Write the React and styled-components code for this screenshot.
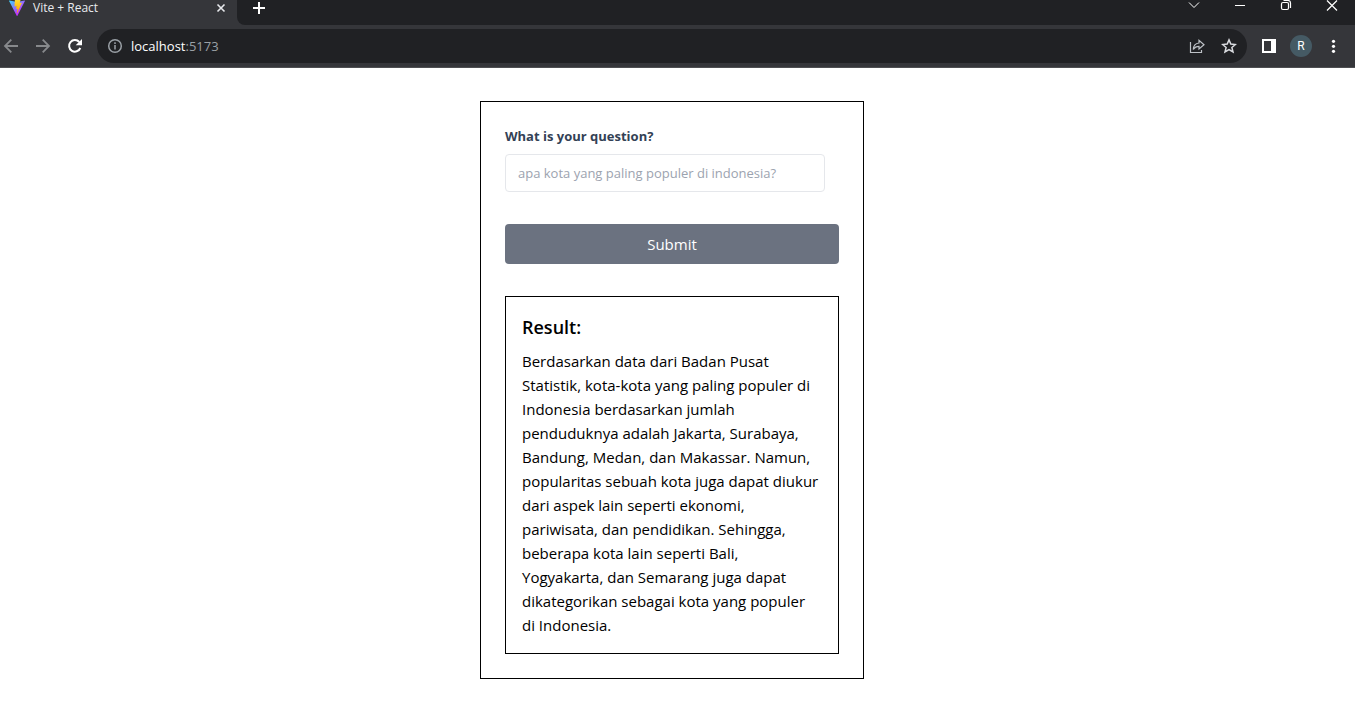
import React, { useState } from "react";
import styled, { createGlobalStyle } from "styled-components";

const GlobalStyle = createGlobalStyle`
  *, *::before, *::after { box-sizing: border-box; }
  body {
    margin: 0;
    background: #fff;
    color: #000;
    font-family: "Segoe UI", "Open Sans", "Noto Sans", sans-serif;
  }
  button, input { font: inherit; }
  h2, p { margin: 0; }
`;

const Chrome = styled.header`
  background: #35363a;
  border-bottom: 1px solid #4e4f52;
`;

const TabStrip = styled.div`
  display: flex;
  height: 25px;
  overflow: hidden;
`;

const Tab = styled.div`
  display: flex;
  align-items: center;
  gap: 8px;
  width: 237px;
  height: 16px;
  padding: 0 8px 0 9px;
  color: #e8eaed;
  font-size: 12px;
  line-height: 16px;
`;

const TabTitle = styled.span`
  flex: 1;
`;

const StripRest = styled.div`
  flex: 1;
  display: flex;
  align-items: flex-start;
  justify-content: space-between;
  padding: 0 15px 0 14px;
  background: #202124;
  border-bottom-left-radius: 8px;
`;

const WindowControls = styled.div`
  display: flex;
  gap: 30px;
`;

const IconButton = styled.button`
  display: flex;
  flex: none;
  padding: 0;
  border: 0;
  background: none;
  color: ${(p) => p.$color || "#fff"};
  cursor: pointer;
`;

const Toolbar = styled.div`
  display: flex;
  align-items: center;
  gap: 14px;
  height: 42px;
  padding: 0 14px 0 3px;
`;

const Group = styled.div`
  display: flex;
  align-items: center;
  gap: ${(p) => p.$gap}px;
`;

const AddressBar = styled.div`
  flex: 1;
  display: flex;
  align-items: center;
  gap: 8px;
  height: 34px;
  padding: 0 10px;
  border-radius: 17px;
  background: #202124;
`;

const Address = styled.div`
  flex: 1;
  color: #9aa0a6;
  font-size: 13px;
  line-height: 20px;
`;

const Host = styled.span`
  color: #fff;
`;

const Avatar = styled.button`
  width: 22px;
  height: 22px;
  padding: 0;
  border: 0;
  border-radius: 50%;
  background: #455a64;
  color: #fff;
  font-family: Roboto, "Liberation Sans", sans-serif;
  font-size: 12px;
  line-height: 22px;
  text-align: center;
`;

const Page = styled.main`
  display: flex;
  justify-content: center;
  padding: 33px 11px 32px 0;
`;

const Card = styled.form`
  display: flex;
  flex-direction: column;
  gap: 32px;
  width: 384px;
  padding: 24px;
  border: 1px solid #000;
`;

const Field = styled.div`
  display: flex;
  flex-direction: column;
  gap: 8px;
`;

const Label = styled.label`
  color: #334155;
  font-size: 13px;
  font-weight: 700;
  line-height: 20px;
`;

const TextInput = styled.input`
  width: 320px;
  height: 38px;
  padding: 0 12px;
  border: 1px solid #e5e7eb;
  border-radius: 4px;
  background: #fff;
  color: #374151;
  font-size: 13px;
  outline: none;
  &::placeholder { color: #9ca3af; opacity: 1; }
`;

const Submit = styled.button`
  height: 40px;
  border: 0;
  border-radius: 4px;
  background: #6b7280;
  color: #fff;
  font-size: 15px;
  line-height: 24px;
  cursor: pointer;
`;

const Result = styled.section`
  padding: 16px;
  border: 1px solid #000;
`;

const ResultTitle = styled.h2`
  margin-bottom: 8px;
  font-size: 18px;
  font-weight: 600;
  line-height: 28px;
`;

const ResultText = styled.p`
  font-size: 15px;
  line-height: 24px;
`;

const Icon = ({ children, size = 16, width = 2, box = 16 }) => (
  <svg
    width={size}
    height={size}
    viewBox={`0 0 ${box} ${box}`}
    fill="none"
    stroke="currentColor"
    strokeWidth={width}
    aria-hidden="true"
  >
    {children}
  </svg>
);

const ViteLogo = () => (
  <svg width="16" height="16" viewBox="0 22 256 235" preserveAspectRatio="none" aria-hidden="true">
    <defs>
      <linearGradient id="viteBody" x1="0%" x2="58%" y1="8%" y2="79%">
        <stop offset="0%" stopColor="#41d1ff" />
        <stop offset="100%" stopColor="#bd34fe" />
      </linearGradient>
      <linearGradient id="viteBolt" x1="43%" x2="50%" y1="2%" y2="89%">
        <stop offset="0%" stopColor="#ffea83" />
        <stop offset="8%" stopColor="#ffdd35" />
        <stop offset="100%" stopColor="#ffa800" />
      </linearGradient>
    </defs>
    <path fill="url(#viteBody)" d="M255.153 37.938 134.897 252.976c-2.483 4.44-8.862 4.466-11.382.048L.875 37.958c-2.746-4.814 1.371-10.646 6.827-9.67l120.385 21.517a6.537 6.537 0 0 0 2.322-.004l117.867-21.483c5.438-.991 9.574 4.796 6.877 9.62Z" />
    <path fill="url(#viteBolt)" d="M185.432.063 96.44 17.501a3.268 3.268 0 0 0-2.634 3.014l-5.474 92.456a3.268 3.268 0 0 0 3.997 3.378l24.777-5.718c2.318-.535 4.413 1.507 3.936 3.838l-7.361 36.047c-.495 2.426 1.782 4.5 4.151 3.78l15.304-4.649c2.372-.72 4.652 1.36 4.15 3.788l-11.698 56.621c-.732 3.542 3.979 5.473 5.943 2.437l1.313-2.028 72.516-144.72c1.215-2.423-.88-5.186-3.54-4.672l-25.505 4.922c-2.396.462-4.435-1.77-3.759-4.114l16.646-57.705c.677-2.35-1.37-4.583-3.769-4.113Z" />
  </svg>
);

export default function App() {
  const [question, setQuestion] = useState("");

  return (
    <>
      <GlobalStyle />
      <Chrome>
        <TabStrip>
          <Tab>
            <ViteLogo />
            <TabTitle>Vite + React</TabTitle>
            <IconButton aria-label="Close tab" $color="#e8eaed">
              <Icon width={1.6}><path d="M4.500 4.500l7 7M11.500 4.500l-7 7" /></Icon>
            </IconButton>
          </Tab>
          <StripRest>
            <IconButton aria-label="New tab">
              <Icon><path d="M8 2v12M2 8h12" /></Icon>
            </IconButton>
            <WindowControls>
              <IconButton aria-label="Search tabs">
                <Icon width={1}><path d="M3 2.500l5 5 5-5" /></Icon>
              </IconButton>
              <IconButton aria-label="Minimize">
                <Icon width={1}><path d="M3 5.500h10" /></Icon>
              </IconButton>
              <IconButton aria-label="Restore">
                <Icon width={1.2}>
                  <rect x="3.500" y="2.500" width="7" height="7" rx="1.500" />
                  <path d="M5.500 .5H10Q12.500 .5 12.500 3V8" />
                </Icon>
              </IconButton>
              <IconButton aria-label="Close window">
                <Icon width={1.2}><path d="M3 .5l10 10M13 .5l-10 10" /></Icon>
              </IconButton>
            </WindowControls>
          </StripRest>
        </TabStrip>
        <Toolbar>
          <Group $gap={16}>
            <IconButton aria-label="Back" $color="#87898c">
              <Icon width={1.8}><path d="M15 8H2.300M8.300 1.700L2 8L8.300 14.300" /></Icon>
            </IconButton>
            <IconButton aria-label="Forward" $color="#87898c">
              <Icon width={1.8}><path d="M1 8h12.700M7.700 1.700L14 8L7.700 14.300" /></Icon>
            </IconButton>
            <IconButton aria-label="Reload">
              <Icon width={2}>
                <path d="M13.300 10A5.800 5.800 0 1 1 12.300 4" />
                <path d="M15 1v6.300H8.700z" fill="currentColor" stroke="none" />
              </Icon>
            </IconButton>
          </Group>
          <AddressBar>
            <IconButton aria-label="Site information" $color="#9aa0a6">
              <Icon width={1.5}>
                <circle cx="8" cy="8" r="6.300" />
                <path d="M8 7v4.500M8 4.300v1.700" />
              </Icon>
            </IconButton>
            <Address><Host>localhost</Host>:5173</Address>
            <Group $gap={16}>
              <IconButton aria-label="Share" $color="#bdc1c6">
                <Icon width={1.2}>
                  <path d="M1.500 4V14.500H12.500V12" />
                  <path d="M4.300 11.500C4.500 7.500 6.500 5.300 10 5V2.300L15 6.700L10 11V8.300C7.300 8.300 5.500 9.500 4.300 11.500z" />
                </Icon>
              </IconButton>
              <IconButton aria-label="Bookmark" $color="#dadce0">
                <Icon width={1.5}>
                  <path d="M8 1.900l1.800 4.200 4.600.4-3.500 3 1.100 4.500L8 11.600 4 14l1.100-4.500-3.500-3 4.600-.4z" />
                </Icon>
              </IconButton>
            </Group>
          </AddressBar>
          <Group $gap={13}>
            <IconButton aria-label="Side panel">
              <Icon>
                <path d="M1 1h14v14H1zM3 3v10h7V3z" fill="currentColor" fillRule="evenodd" stroke="none" />
              </Icon>
            </IconButton>
            <Avatar aria-label="Profile">R</Avatar>
            <IconButton aria-label="Menu">
              <Icon>
                <g fill="currentColor" stroke="none">
                  <circle cx="8.500" cy="3.300" r="1.600" />
                  <circle cx="8.500" cy="8.300" r="1.600" />
                  <circle cx="8.500" cy="13.300" r="1.600" />
                </g>
              </Icon>
            </IconButton>
          </Group>
        </Toolbar>
      </Chrome>
      <Page>
        <Card onSubmit={(e) => e.preventDefault()}>
          <Field>
            <Label htmlFor="question">What is your question?</Label>
            <TextInput
              id="question"
              type="text"
              placeholder="apa kota yang paling populer di indonesia?"
              value={question}
              onChange={(e) => setQuestion(e.target.value)}
            />
          </Field>
          <Submit type="submit">Submit</Submit>
          <Result>
            <ResultTitle>Result:</ResultTitle>
            <ResultText>
              {"Berdasarkan data dari Badan Pusat Statistik, kota-kota yang paling populer di Indonesia berdasarkan jumlah penduduknya adalah Jakarta, Surabaya, Bandung, Medan, dan Makassar. Namun, popularitas sebuah kota juga dapat diukur dari aspek lain seperti ekonomi, pariwisata, dan pendidikan. Sehingga, beberapa kota lain seperti Bali, Yogyakarta, dan Semarang juga dapat dikategorikan sebagai kota yang populer di\u00a0Indonesia."}
            </ResultText>
          </Result>
        </Card>
      </Page>
    </>
  );
}
